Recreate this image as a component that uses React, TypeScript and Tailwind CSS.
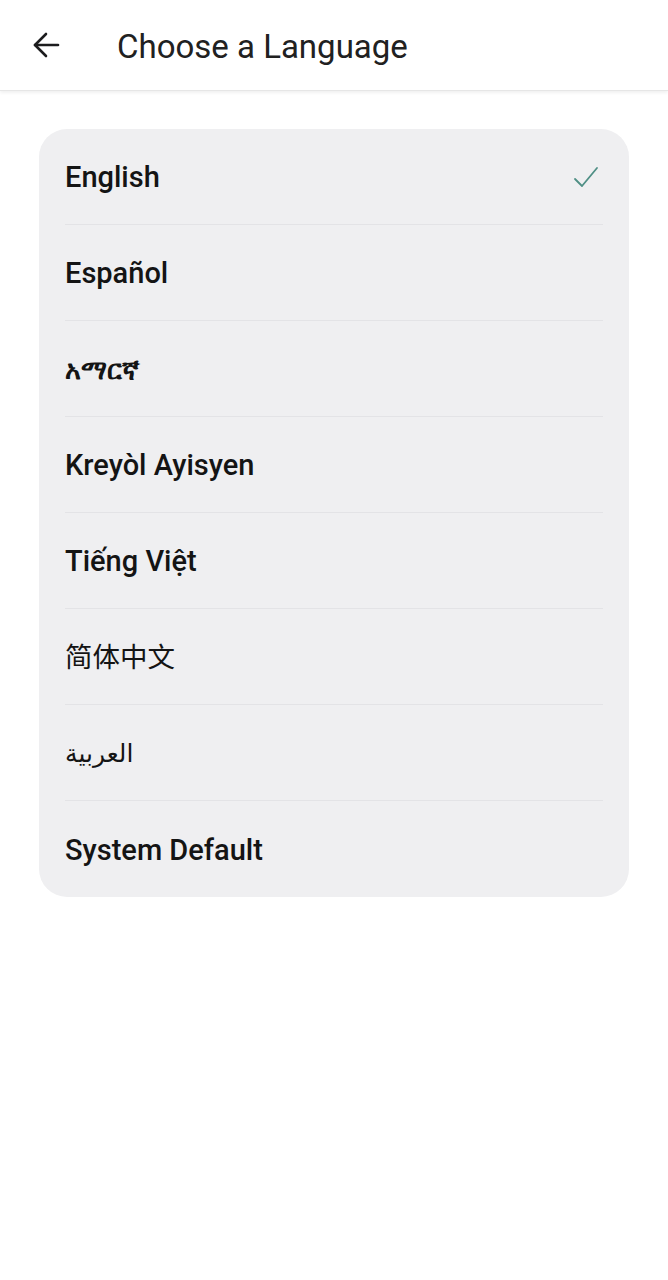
import React from 'react';

const languages = [
  { id: 'en', label: 'English', selected: true, cls: 'text-[29px] font-medium' },
  { id: 'es', label: 'Español', cls: 'text-[29px] font-medium' },
  { id: 'am', label: 'አማርኛ', cls: 'text-[26.5px] font-semibold' },
  { id: 'ht', label: 'Kreyòl Ayisyen', cls: 'text-[29px] font-medium' },
  { id: 'vi', label: 'Tiếng Việt', cls: 'text-[29px] font-medium' },
  { id: 'zh', label: '简体中文', cls: 'text-[27.5px] font-normal' },
  { id: 'ar', label: 'العربية', cls: 'text-[25px] font-normal' },
  { id: 'sys', label: 'System Default', cls: 'text-[29px] font-medium' },
];

export default function App() {
  return (
    <div
      className="min-h-[1280px] w-full bg-white text-[#1c1c1e]"
      style={{ fontFamily: 'Roboto, "Noto Sans", "Noto Sans CJK SC", "DejaVu Sans", sans-serif' }}
    >
      {/* Header */}
      <div className="flex h-[91px] items-center border-b border-[#e6e6e6] bg-white shadow-[0_2px_3px_rgba(0,0,0,0.06)]">
        <button className="ml-[30px] flex h-[32px] w-[32px] items-center justify-center">
          <svg width="28" height="28" viewBox="0 0 28 28" fill="none" stroke="#1c1c1e" strokeWidth="2.6" strokeLinecap="round" strokeLinejoin="round">
            <path d="M26 14H3" />
            <path d="M14 3L3 14L14 25" />
          </svg>
        </button>
        <h1 className="ml-[55px] pt-[3px] text-[33px] font-normal text-[#212121]">Choose a Language</h1>
      </div>

      {/* Language list */}
      <div className="px-[39px] pt-[38px]">
        <div className="rounded-[28px] bg-[#efeff1] pl-[26px] pr-[26px]">
          {languages.map((lang, i) => (
            <div
              key={lang.id}
              className={`flex h-[96px] items-center justify-between pt-[3px] ${i < languages.length - 1 ? 'border-b border-[#e3e3e6]' : ''}`}
            >
              <span className={`${lang.cls} text-[#141414]`}>{lang.label}</span>
              {lang.selected && (
                <svg className="mr-[4px]" width="26" height="24" viewBox="0 0 26 24" fill="none" stroke="#4f8f85" strokeWidth="1.8" strokeLinecap="round" strokeLinejoin="round">
                  <path d="M2 13L9 20L24 2" />
                </svg>
              )}
            </div>
          ))}
        </div>
      </div>
    </div>
  );
}
